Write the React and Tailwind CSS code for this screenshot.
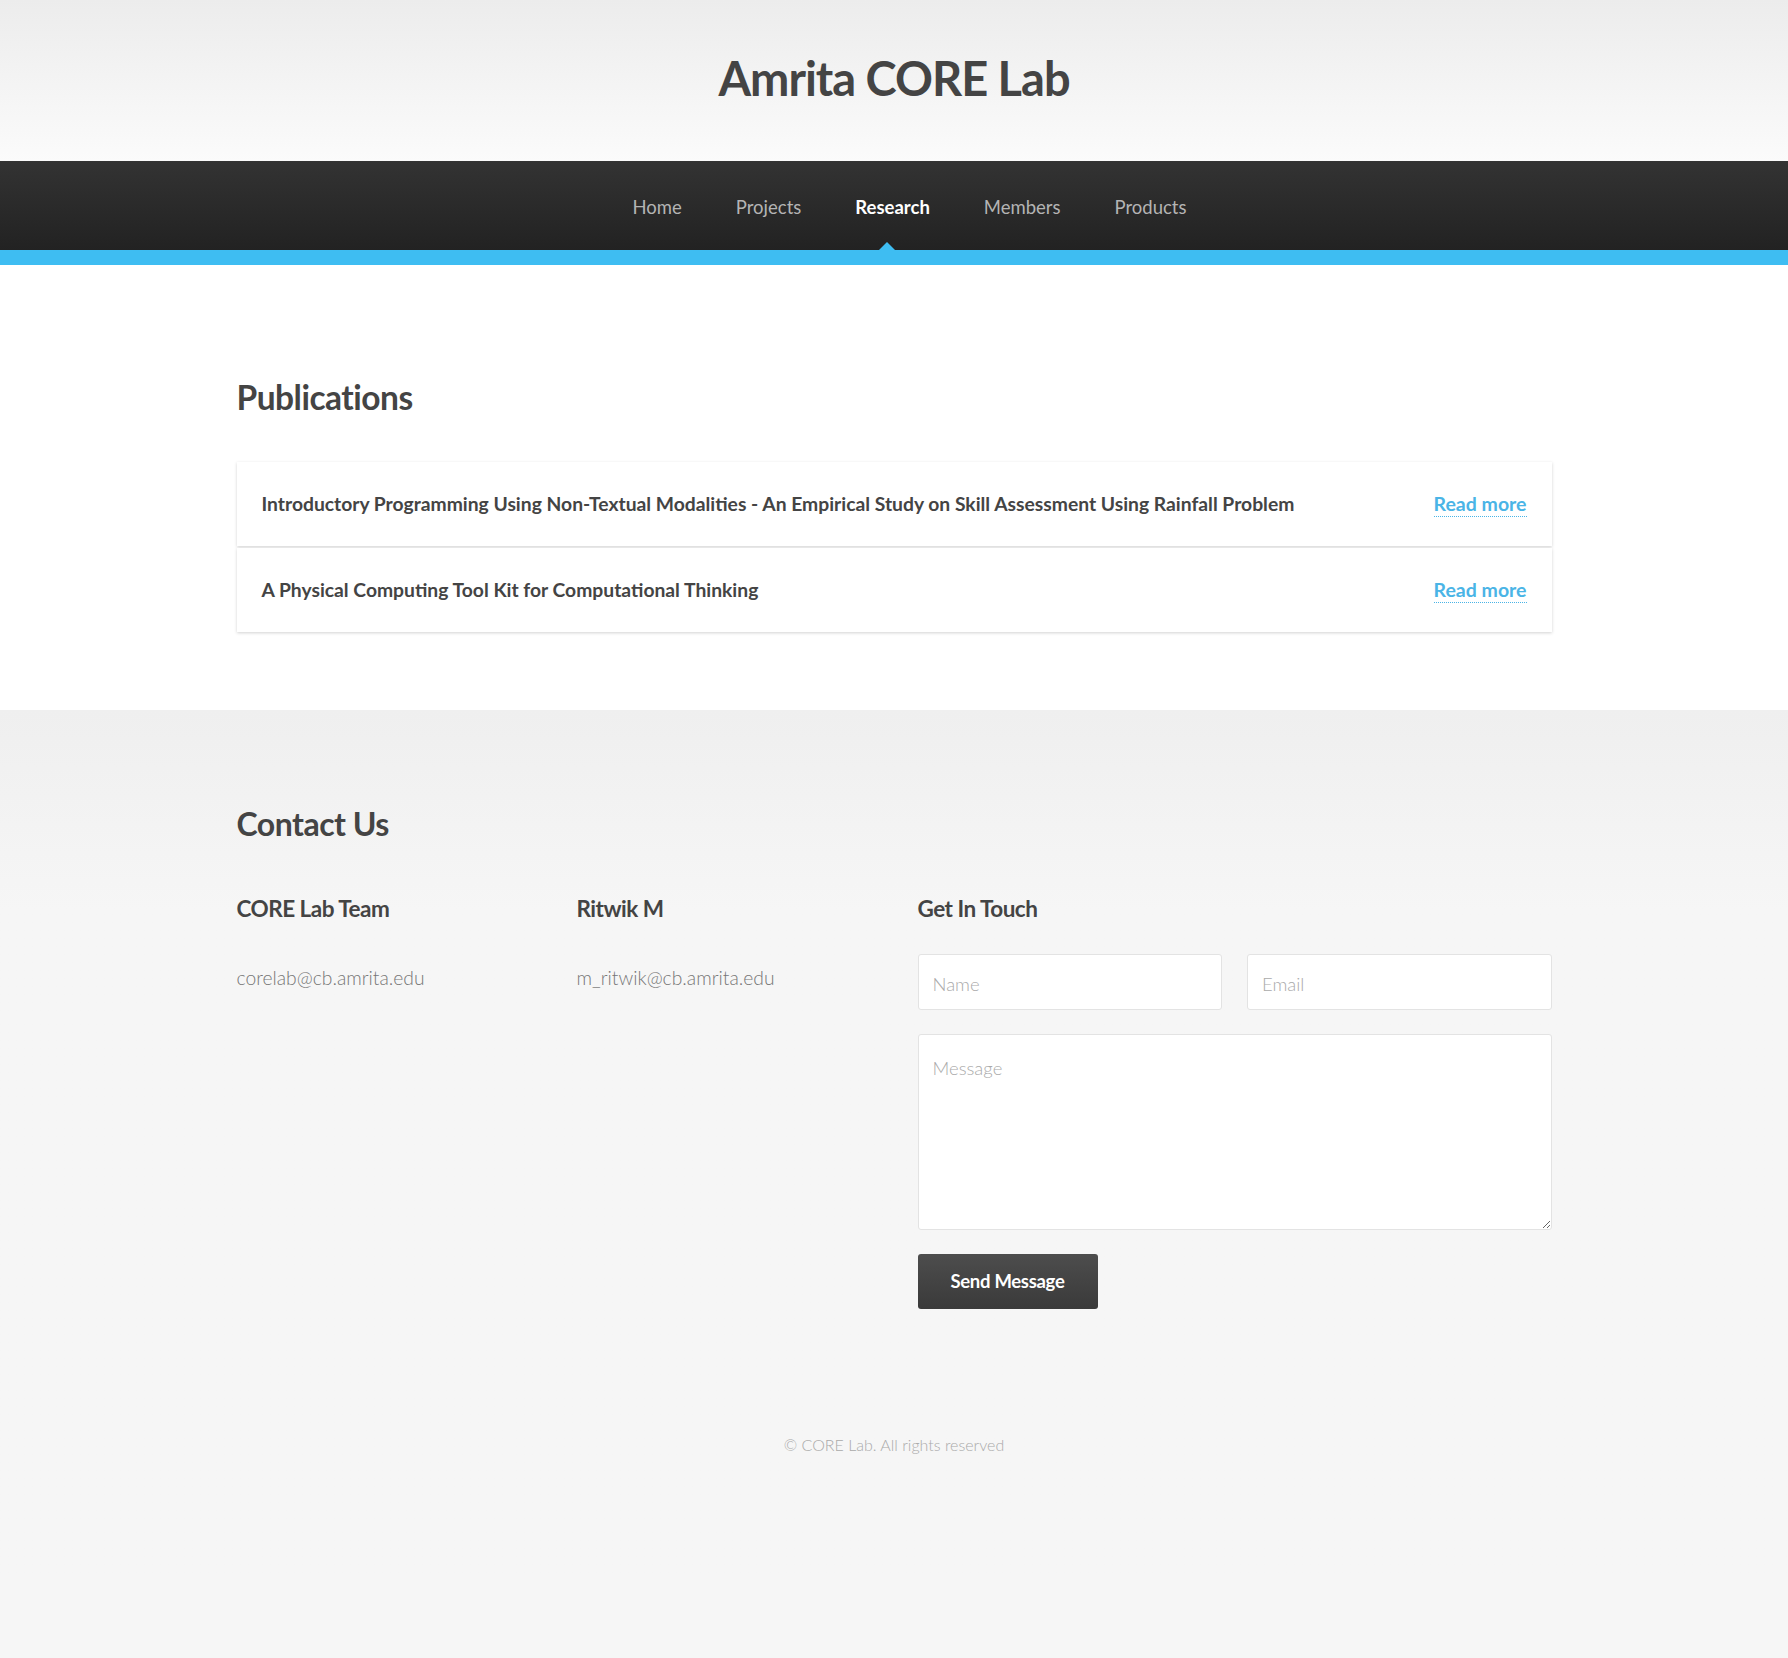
import React from "react";

const font = { fontFamily: "Lato, 'Open Sans', sans-serif" };

function NavItem({ label, active }) {
  return (
    <div className="relative flex h-full items-center px-[27px] pt-[4px]">
      <span
        className={
          active
            ? "text-[18.5px] font-bold text-white"
            : "text-[18.5px] font-normal text-[#b4b4b4]"
        }
      >
        {label}
      </span>
      {active && (
        <div className="absolute bottom-0 left-[calc(50%-6px)] h-0 w-0 -translate-x-1/2 border-x-[8px] border-b-[8px] border-x-transparent border-b-[#3ebdf2]" />
      )}
    </div>
  );
}

function PubCard({ title }) {
  return (
    <div className="flex h-[84px] items-center justify-between bg-white px-[25px] shadow-[0_1px_3px_rgba(0,0,0,0.18)]">
      <span className="text-[19.3px] font-bold text-[#444]">{title}</span>
      <a className="border-b border-dotted border-[#4ab4e6] pb-[1px] text-[19.5px] font-bold leading-[23px] text-[#4ab4e6]">
        Read more
      </a>
    </div>
  );
}

export default function App() {
  return (
    <div style={font} className="min-h-[1658px] w-full bg-[#f6f6f6]">
      <header className="flex h-[161px] items-center justify-center bg-gradient-to-b from-[#ececec] to-[#fbfbfb]">
        <h1 className="mb-[4px] text-[47px] font-bold tracking-[-1px] text-[#444]">Amrita CORE Lab</h1>
      </header>
      <nav className="flex h-[89px] items-center justify-center bg-gradient-to-b from-[#333] to-[#222] pl-[31px]">
        <NavItem label="Home" />
        <NavItem label="Projects" />
        <NavItem label="Research" active />
        <NavItem label="Members" />
        <NavItem label="Products" />
      </nav>
      <div className="h-[15px] bg-[#3ebdf2]" />

      <section className="bg-white pb-[78px] pt-[102px]">
        <div className="mx-auto w-[1315px]">
          <h2 className="text-[33.5px] font-bold leading-[60px] tracking-[-0.5px] text-[#444]">Publications</h2>
          <div className="mt-[35px] flex flex-col gap-[2px]">
            <PubCard title="Introductory Programming Using Non-Textual Modalities - An Empirical Study on Skill Assessment Using Rainfall Problem" />
            <PubCard title="A Physical Computing Tool Kit for Computational Thinking" />
          </div>
        </div>
      </section>

      <section className="bg-gradient-to-b from-[#efefef] from-[0px] to-[#f6f6f6] to-[200px] pb-[120px] pt-[84px]">
        <div className="mx-auto w-[1315px]">
          <h2 className="text-[32px] font-bold leading-[60px] tracking-[-0.5px] text-[#444]">Contact Us</h2>
          <div className="mt-[40px] flex">
            <div className="w-[340px]">
              <h3 className="text-[22.5px] font-bold leading-[30px] tracking-[-0.5px] text-[#444]">CORE Lab Team</h3>
              <p className="mt-[40px] text-[19.3px] font-light text-[#777]">corelab@cb.amrita.edu</p>
            </div>
            <div className="w-[341px]">
              <h3 className="text-[22.5px] font-bold leading-[30px] tracking-[-0.5px] text-[#444]">Ritwik M</h3>
              <p className="mt-[40px] text-[19.3px] font-light text-[#777]">m_ritwik@cb.amrita.edu</p>
            </div>
            <div className="flex-1">
              <h3 className="text-[22.5px] font-bold leading-[30px] tracking-[-0.5px] text-[#444]">Get In Touch</h3>
              <div className="mt-[30px] flex gap-[25px]">
                <input
                  placeholder="Name"
                  className="h-[56px] flex-1 rounded-[3px] border border-[#e3e3e3] bg-white px-[14px] pt-[3px] text-[18.5px] font-light text-[#555] placeholder:text-[#aaa] outline-none"
                />
                <input
                  placeholder="Email"
                  className="h-[56px] flex-1 rounded-[3px] border border-[#e3e3e3] bg-white px-[14px] pt-[3px] text-[18.5px] font-light text-[#555] placeholder:text-[#aaa] outline-none"
                />
              </div>
              <textarea
                placeholder="Message"
                className="mt-[24px] block h-[196px] w-full resize-y rounded-[3px] border border-[#e3e3e3] bg-white px-[14px] pt-[20px] text-[18.5px] font-light text-[#555] placeholder:text-[#aaa] outline-none"
              />
              <button className="mt-[24px] h-[55px] w-[180px] rounded-[3px] bg-gradient-to-b from-[#4d4d4d] to-[#3a3a3a] text-[18.5px] font-bold tracking-[-0.3px] text-white">
                Send Message
              </button>
            </div>
          </div>
          <p className="mt-[124px] text-center text-[16px] font-light text-[#aaa]">© CORE Lab. All rights reserved</p>
        </div>
      </section>
    </div>
  );
}
